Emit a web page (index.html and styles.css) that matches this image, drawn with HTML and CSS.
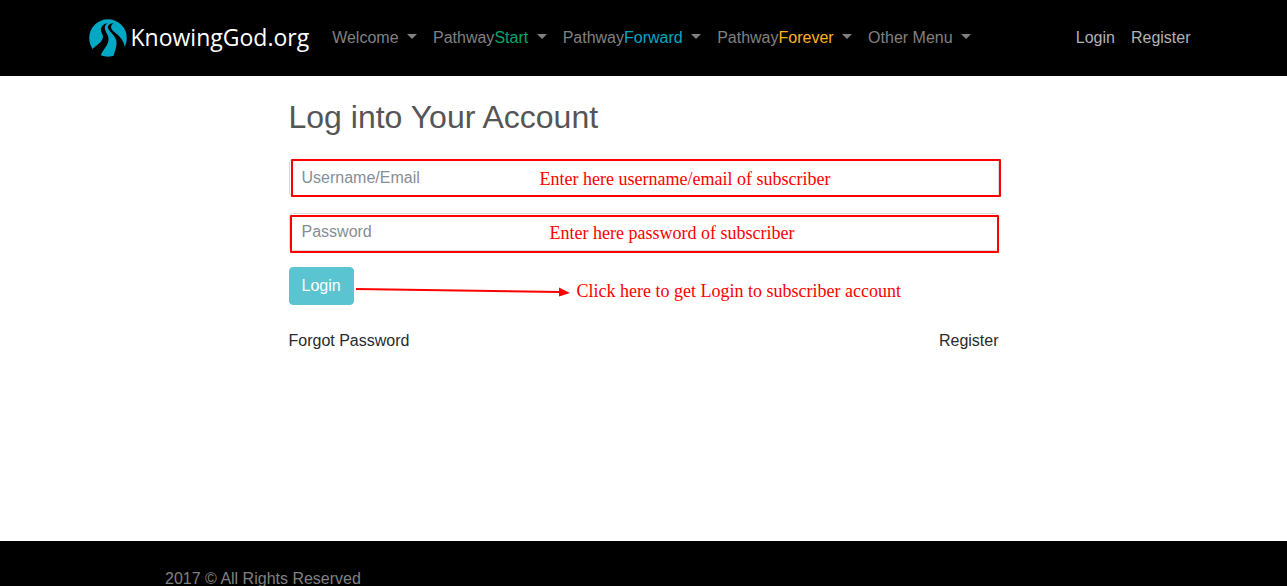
FILE: index.html
```html
<!DOCTYPE html>
<html lang="en">
<head>
<meta charset="utf-8">
<meta name="viewport" content="width=device-width, initial-scale=1">
<title>KnowingGod.org - Login</title>
<link rel="stylesheet" href="styles.css">
</head>
<body>
<header class="site-header">
  <div class="container navbar">
    <a class="brand" href="#">
      <svg class="brand-mark" viewBox="0 0 38 38" aria-hidden="true">
        <circle cx="19" cy="19" r="18.8" fill="#00a8c6"/>
        <path d="M18.500 4C14 5 11.500 8 12 11.500C12.400 14.500 15 16.500 13.500 20C11.500 24 8 26 4 29.500L0 40H11C11.500 35.500 13.500 32.500 16 29C19.500 24 20.500 20 18.500 16C16.500 12 13.500 8 18.500 4Z" fill="#000"/>
        <path d="M24.500 4C19.500 4.500 17.500 7.500 20 11C22.500 14.500 27 17.500 27.500 23C28 28.500 25 33 24 40H38V29L36 29.500C35.500 24 32.500 19 28.500 15.500C24 12 19 8.500 24.500 4Z" fill="#000"/>
      </svg>
      <span class="brand-name">KnowingGod.org</span>
    </a>
    <nav class="menu" aria-label="Main">
      <a class="menu-link dropdown" href="#">Welcome </a>
      <a class="menu-link dropdown" href="#">Pathway<span class="start">Start</span> </a>
      <a class="menu-link dropdown" href="#">Pathway<span class="forward">Forward</span> </a>
      <a class="menu-link dropdown" href="#">Pathway<span class="forever">Forever</span> </a>
      <a class="menu-link dropdown" href="#">Other Menu </a>
    </nav>
    <nav class="menu account" aria-label="Account">
      <a class="menu-link" href="#">Login</a>
      <a class="menu-link" href="#">Register</a>
    </nav>
  </div>
</header>
<main class="content">
  <form class="login">
    <h1 class="title">Log into Your Account</h1>
    <div class="field">
      <input class="control" type="text" placeholder="Username/Email" aria-label="Username/Email">
      <span class="outline outline-user"></span>
      <span class="note note-user">Enter here username/email of subscriber</span>
    </div>
    <div class="field">
      <input class="control" type="password" placeholder="Password" aria-label="Password">
      <span class="outline outline-pass"></span>
      <span class="note note-pass">Enter here password of subscriber</span>
    </div>
    <div class="field">
      <button class="submit" type="button">Login</button>
      <svg class="arrow" viewBox="0 0 216 12" aria-hidden="true">
        <path d="M1 3L205 6" stroke="#f00" stroke-width="2"/>
        <path d="M204 1.500L215 7L204 10.500Z" fill="#f00"/>
      </svg>
      <span class="note note-login">Click here to get Login to subscriber account</span>
    </div>
    <div class="links">
      <a href="#">Forgot Password</a>
      <a href="#">Register</a>
    </div>
  </form>
</main>
<footer class="site-footer">
  <p class="copyright">2017 © All Rights Reserved</p>
</footer>
</body>
</html>
```
FILE: styles.css
```css
*, *::before, *::after { box-sizing: border-box; }
body {
  margin: 0;
  background: #fff;
  color: #292b2c;
  font: 16px/24px "Liberation Sans", Arial, sans-serif;
}
a { color: inherit; text-decoration: none; }
.site-header { background: #000; padding: 18px 0; }
.container {
  max-width: 1140px;
  margin: 0 auto;
  padding: 0 15px;
}
.navbar { display: flex; align-items: center; }
.brand {
  display: flex;
  align-items: center;
  gap: 4px;
  height: 40px;
  margin-right: 15px;
  color: #fff;
}
.brand-mark { width: 38px; height: 38px; }
.brand-name { padding-bottom: 2px; font: 23px/36px "Open Sans", "Noto Sans", sans-serif; }
.menu { display: flex; color: #808080; white-space: nowrap; }
.menu-link { padding: 8px; white-space: pre; }
.account { margin-left: auto; color: #b3b3b3; }
.dropdown::after {
  content: "";
  display: inline-block;
  margin-left: 4px;
  vertical-align: 4px;
  border-top: 5px solid;
  border-left: 5px solid transparent;
  border-right: 5px solid transparent;
}
.start { color: #00a46f; }
.forward { color: #00a8c6; }
.forever { color: #ffb01f; }
.content { min-height: calc(100vh - 121px); padding: 22px 15px 32px; }
.login { max-width: 710px; margin: 0 auto; }
.title {
  margin: 0 0 22px;
  color: #555;
  font-size: 32px;
  font-weight: 400;
  line-height: 39px;
}
.field { position: relative; margin-bottom: 16px; }
.control {
  display: block;
  width: 100%;
  height: 38px;
  padding: 6px 12px;
  border: 1px solid #d9d9d9;
  border-radius: 4px;
  background: #fff;
  color: #464a4c;
  font: inherit;
}
.control::placeholder { color: #868e96; opacity: 1; }
.submit {
  display: block;
  height: 38px;
  padding: 6px 12px;
  border: 1px solid #5bc4d1;
  border-radius: 4px;
  background: #5bc4d1;
  color: #fff;
  font: inherit;
}
.outline {
  position: absolute;
  height: 38px;
  border: 2px solid #f00;
  border-radius: 1px;
  pointer-events: none;
}
.outline-user { top: 0; left: 2px; right: -2px; }
.outline-pass { top: 2px; left: 1px; right: 0; }
.note {
  position: absolute;
  color: #f00;
  font: 18px/20px "Liberation Serif", "Times New Roman", serif;
  white-space: nowrap;
  pointer-events: none;
}
.note-user { top: 10px; left: 251px; }
.note-pass { top: 10px; left: 261px; }
.note-login { top: 14px; left: 288px; }
.arrow { position: absolute; top: 19px; left: 66px; width: 216px; height: 12px; }
.links { display: flex; justify-content: space-between; margin-top: 24px; }
.site-footer { background: #000; color: #808080; padding: 26px 165px; }
.copyright { margin: 0; }
```
